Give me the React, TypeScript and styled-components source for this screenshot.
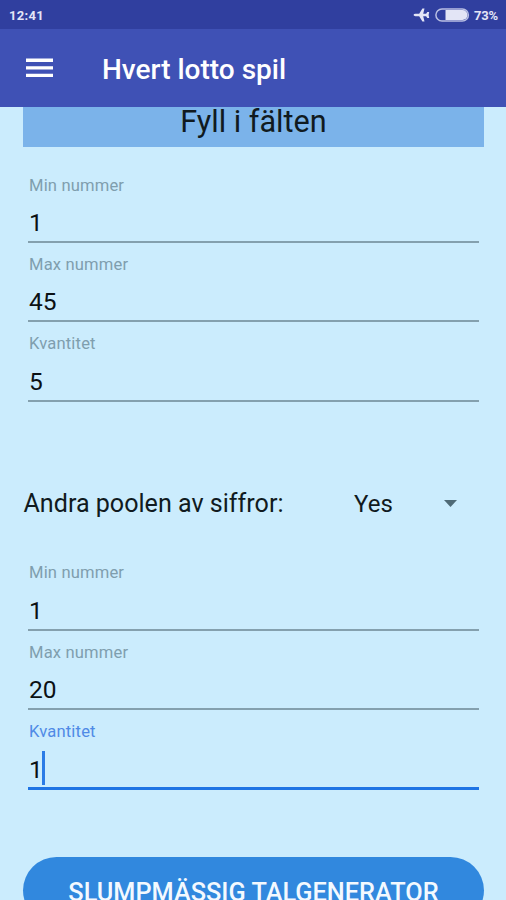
import React from "react";
import styled, { createGlobalStyle } from "styled-components";

const GlobalStyle = createGlobalStyle`
  * { box-sizing: border-box; }
  body { margin: 0; font-family: Roboto, "Liberation Sans", sans-serif; background: #cbecfd; }
`;

const Screen = styled.div`
  width: 506px;
  height: 900px;
  overflow: hidden;
  display: flex;
  flex-direction: column;
  background: #cbecfd;
  color: #101a20;
`;

const StatusBar = styled.header`
  flex: none;
  height: 29px;
  padding: 1px 8px 0 9px;
  display: flex;
  align-items: center;
  justify-content: space-between;
  background: #303f9f;
  color: #e3e5f6;
  font-size: 13px;
  font-weight: 700;
`;

const Clock = styled.span`
  letter-spacing: 0.3px;
`;

const StatusIcons = styled.div`
  display: flex;
  align-items: center;
  gap: 5px;
`;

const Percent = styled.span`
  margin-left: -1px;
  font-size: 13px;
  letter-spacing: -0.2px;
`;

const AppBar = styled.div`
  flex: none;
  height: 78px;
  padding: 3px 0 0 26px;
  display: flex;
  align-items: center;
  gap: 49px;
  background: #3f51b5;
  color: #fff;
`;

const MenuButton = styled.button`
  display: flex;
  width: 27px;
  height: 20px;
  margin-top: -3px;
  padding: 0;
  border: 0;
  background: none;
  color: inherit;
`;

const Title = styled.h1`
  margin: 0;
  font-size: 28px;
  line-height: 35px;
  font-weight: 500;
  white-space: nowrap;
`;

const Content = styled.main`
  flex: 1;
  min-height: 0;
  overflow: hidden;
  display: flex;
  flex-direction: column;
  padding: 0 22px 0 23px;
`;

const Banner = styled.h2`
  flex: none;
  margin: 0;
  height: 40px;
  background: #7bb3ea;
  text-align: center;
  font-size: 30.6px;
  line-height: 29px;
  font-weight: 400;
`;

const FieldGroup = styled.section<{ $top: number }>`
  flex: none;
  margin: ${(p) => p.$top}px 0 0;
  padding: 0 5px;
  display: grid;
  grid-auto-rows: 79.3px;
`;

const Field = styled.label<{ $focused?: boolean }>`
  display: flex;
  flex-direction: column;
  padding-top: 10px;
  color: ${(p) => (p.$focused ? "#4f8ae6" : "#7f9eae")};
`;

const FieldLabel = styled.span`
  padding-left: 1px;
  font-size: 16.6px;
  line-height: 24px;
  letter-spacing: 0.15px;
`;

const FieldValue = styled.span`
  display: flex;
  align-items: center;
  margin-top: 10.6px;
  padding-left: 1px;
  height: 30px;
  font-size: 24.5px;
  line-height: 30px;
  color: #0b1114;
`;

const Underline = styled.span<{ $focused?: boolean }>`
  height: ${(p) => (p.$focused ? 3 : 2)}px;
  margin-top: ${(p) => (p.$focused ? 2.4 : 2.9)}px;
  flex: none;
  background: ${(p) => (p.$focused ? "#1f74e4" : "#84a0ae")};
`;

const Caret = styled.span`
  width: 3px;
  height: 34px;
  flex: none;
  margin-left: -0.5px;
  margin-top: -3px;
  background: #2a7be6;
`;

const PoolRow = styled.div`
  flex: none;
  margin-top: 86px;
  padding-left: 0.5px;
  height: 33px;
  display: flex;
  align-items: center;
  font-size: 25.1px;
  line-height: 34px;
  white-space: nowrap;
`;

const PoolLabel = styled.span`
  width: 330.5px;
`;

const Select = styled.div`
  width: 103px;
  display: flex;
  align-items: center;
  justify-content: space-between;
  font-size: 24px;
`;

const GenerateButton = styled.button`
  flex: none;
  margin-top: 67.5px;
  height: 67px;
  border: 0;
  padding: 2px 0 0;
  border-radius: 34px;
  background: #3188de;
  color: #f3f9ff;
  font: 500 25.3px/68px Roboto, "Liberation Sans", sans-serif;
  white-space: nowrap;
`;

type FieldData = { label: string; value: string; focused?: boolean };

const firstPool: FieldData[] = [
  { label: "Min nummer", value: "1" },
  { label: "Max nummer", value: "45" },
  { label: "Kvantitet", value: "5" },
];

const secondPool: FieldData[] = [
  { label: "Min nummer", value: "1" },
  { label: "Max nummer", value: "20" },
  { label: "Kvantitet", value: "1", focused: true },
];

function Fields({ items, top }: { items: FieldData[]; top: number }) {
  return (
    <FieldGroup $top={top}>
      {items.map((f) => (
        <Field key={f.label} $focused={f.focused}>
          <FieldLabel>{f.label}</FieldLabel>
          <FieldValue>
            {f.value}
            {f.focused && <Caret />}
          </FieldValue>
          <Underline $focused={f.focused} />
        </Field>
      ))}
    </FieldGroup>
  );
}

export default function App() {
  return (
    <>
      <GlobalStyle />
      <Screen>
        <StatusBar>
          <Clock>12:41</Clock>
          <StatusIcons>
            <svg width="17" height="14" viewBox="0 0 17 14">
              <path
                fill="currentColor"
                d="M0.500 7q.3-1.100 1.900-1.200H6.200L9.400 0.600h2.100L10.200 5.700h2.900L14.300 4h1.900L15.600 7l.6 3h-1.900L13.100 8.300h-2.900L11.500 13.400H9.400L6.200 8.200H2.400Q.8 8.100.5 7z"
              />
            </svg>
            <svg width="35" height="14" viewBox="0 0 35 14">
              <rect x="0.900" y="0.900" width="32.500" height="12.200" rx="6.100" fill="none" stroke="#b9bfe3" strokeWidth="1.500" />
              <path d="M10.500 2h17a5 5 0 0 1 0 10h-17z" fill="#e3e5f6" />
            </svg>
            <Percent>73%</Percent>
          </StatusIcons>
        </StatusBar>
        <AppBar>
          <MenuButton aria-label="Menu">
            <svg width="27" height="20" viewBox="0 0 27 20">
              <path d="M0 2.300h27M0 9.900h27M0 17.400h27" stroke="currentColor" strokeWidth="3.400" />
            </svg>
          </MenuButton>
          <Title>Hvert lotto spil</Title>
        </AppBar>
        <Content>
          <Banner>Fyll i fälten</Banner>
          <Fields items={firstPool} top={16.5} />
          <PoolRow>
            <PoolLabel>Andra poolen av siffror:</PoolLabel>
            <Select>
              Yes
              <svg width="13" height="7" viewBox="0 0 13 7">
                <path d="M0 0h13L6.500 7z" fill="#4f6a76" />
              </svg>
            </Select>
          </PoolRow>
          <Fields items={secondPool} top={31} />
          <GenerateButton>SLUMPMÄSSIG TALGENERATOR</GenerateButton>
        </Content>
      </Screen>
    </>
  );
}
